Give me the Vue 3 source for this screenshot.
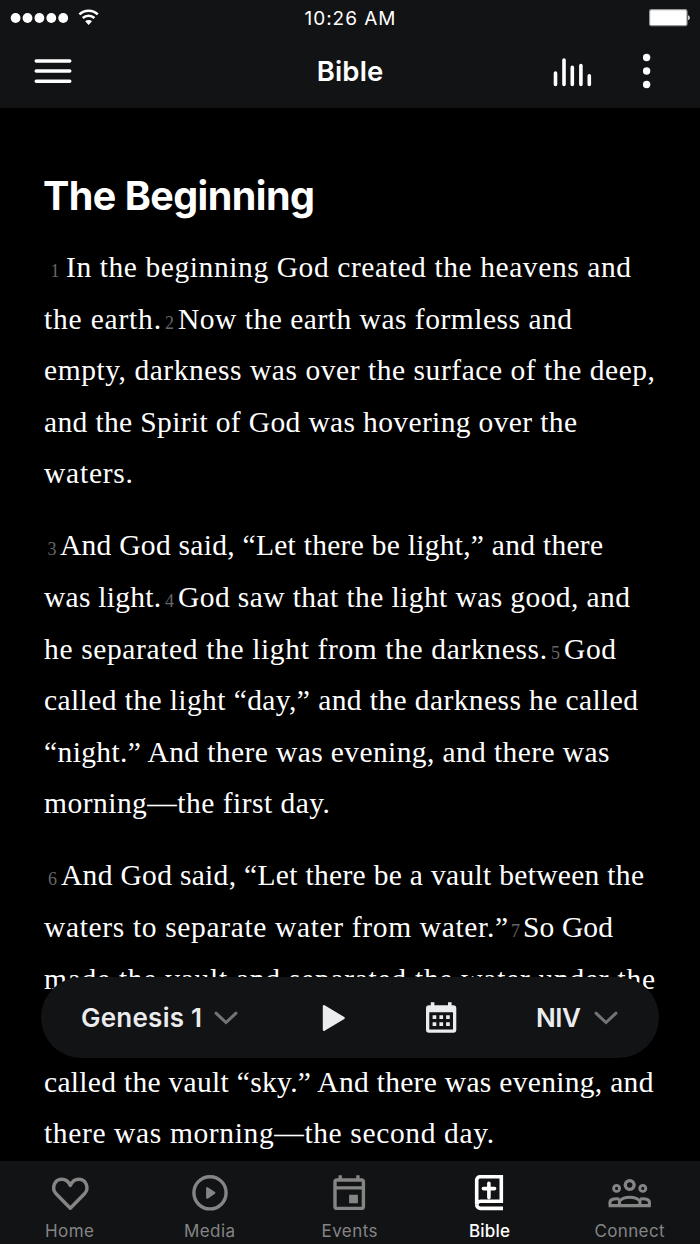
<template>
  <div class="screen">
    <header class="top">
      <div class="status">
        <div class="signal">
          <svg width="100" height="36" viewBox="0 0 100 36">
            <circle v-for="n in 5" :key="n" :cx="3.7 + n * 11.9" cy="18" r="4.9" fill="#fff" />
            <g fill="none" stroke="#fff" stroke-width="2.5">
              <path d="M79.4 14.4a13.2 13.2 0 0 1 18.4 0" />
              <path d="M82.8 18a8.4 8.4 0 0 1 11.6 0" />
            </g>
            <path d="M85.2 21.3a4.8 4.8 0 0 1 6.8 0l-3.4 3.6z" fill="#fff" />
          </svg>
        </div>
        <span class="time" :style="fit('10:26 AM', sans(400, 19), 91)">10:26 AM</span>
        <svg class="battery" width="42" height="18" viewBox="0 0 42 18">
          <rect x=".6" y=".7" width="37.4" height="16" rx="1.8" fill="#fff" stroke="#97989a" stroke-width="1.2" />
          <path d="M39.2 6.2c2 .8 2 4.2 0 5z" fill="#fff" />
        </svg>
      </div>
      <div class="bar">
        <svg class="menu" width="38" height="26" viewBox="0 0 38 26">
          <path d="M2.2 3h33.6M2.2 13h33.6M2.2 23.3h33.6" stroke="#fff" stroke-width="3.4" stroke-linecap="round" />
        </svg>
        <h1 :style="fit('Bible', sans(600, 27.5), 66.5)">Bible</h1>
        <div class="actions">
          <svg width="40" height="33" viewBox="0 0 40 33">
            <path d="M2.5 18v11.4M11 5v24.4M19.3 12.4v17M27.9 10.6v18.8M36.3 20.8v8.6" stroke="#fff" stroke-width="3.6" stroke-linecap="round" />
          </svg>
          <svg width="8" height="36" viewBox="0 0 8 36">
            <circle cx="3.6" cy="4.5" r="3.7" fill="#fff" />
            <circle cx="3.6" cy="18" r="3.7" fill="#fff" />
            <circle cx="3.6" cy="31.5" r="3.7" fill="#fff" />
          </svg>
        </div>
      </div>
    </header>

    <main class="chapter">
      <h2 :style="fit('The Beginning', sans(700, 39.5), 272)">The Beginning</h2>
      <div v-for="(paragraph, p) in paragraphs" :key="p" class="paragraph">
        <div v-for="(line, l) in paragraph" :key="l" class="line">
          <template v-for="(part, i) in line" :key="i">
            <span v-if="part.verse" class="verse" :style="{ width: part.width + 'px' }">{{ part.verse }}</span>
            <span v-else class="words" :style="fit(part.text, serif, part.width)">{{ part.text }}</span>
          </template>
        </div>
      </div>
    </main>

    <div class="player">
      <button class="picker book">
        <span :style="fit('Genesis 1', sans(600, 26), 121)">Genesis 1</span>
        <svg width="24" height="14" viewBox="0 0 24 14">
          <path d="M2 2.2l10 9.3 10-9.3" fill="none" stroke="#737476" stroke-width="3" stroke-linecap="round" />
        </svg>
      </button>
      <svg class="play" width="24" height="28" viewBox="0 0 24 28">
        <path d="M2 2.2v23.6L21.6 14z" fill="#ebecee" stroke="#ebecee" stroke-width="2.4" stroke-linejoin="round" />
      </svg>
      <svg class="calendar" width="32" height="32" viewBox="0 0 32 32">
        <path fill="#ebecee" fill-rule="evenodd" d="M5.8.3h3.6v3H23v-3h3.6v3h1.7a3 3 0 0 1 3 3v21.5a3 3 0 0 1-3 3H4a3 3 0 0 1-3-3V6.3a3 3 0 0 1 3-3h1.8zM4.3 10.2v17.3H28V10.2z" />
        <path fill="#ebecee" d="M7.6 13.2h3.7v3.7H7.6zM14.4 13.2h3.7v3.7h-3.7zM21.1 13.2h3.7v3.7h-3.7zM7.6 20.2h3.7v3.7H7.6zM14.4 20.2h3.7v3.7h-3.7zM21.1 20.2h3.7v3.7h-3.7z" />
      </svg>
      <button class="picker version">
        <span :style="fit('NIV', sans(600, 26), 45)">NIV</span>
        <svg width="24" height="14" viewBox="0 0 24 14">
          <path d="M2 2.2l10 9.3 10-9.3" fill="none" stroke="#737476" stroke-width="3" stroke-linecap="round" />
        </svg>
      </button>
    </div>

    <nav class="tabs">
      <a v-for="tab in tabs" :key="tab.name" class="tab" :class="{ active: tab.name === 'Bible' }">
        <svg width="46" height="40" viewBox="0 0 46 40" fill="none" stroke="currentColor" stroke-width="3.4">
          <path v-if="tab.name === 'Home'" d="M23.3 35.2L9.1 20.8C4.3 15.9 7 6.2 14.7 6.2c4.4 0 7.2 3 8.6 6.3 1.4-3.3 4.2-6.3 8.6-6.3 7.7 0 10.4 9.7 5.6 14.6z" stroke-linejoin="round" />
          <template v-else-if="tab.name === 'Media'">
            <circle cx="23" cy="19.8" r="16.1" />
            <path d="M20.1 15v9.8l7.3-4.9z" fill="currentColor" stroke-width="2" stroke-linejoin="round" />
          </template>
          <template v-else-if="tab.name === 'Events'">
            <rect x="8" y="7" width="28.4" height="28.4" rx="2" />
            <path d="M7 14.9h30M13.2 2.2V8M30.9 2.2V8" />
            <path d="M22.1 21.7h8.8v8.6h-8.8z" fill="currentColor" stroke="none" />
          </template>
          <template v-else-if="tab.name === 'Bible'">
            <path d="M36 35.4H13.5a3.8 3.8 0 0 1-3.8-3.8V7.1A3.3 3.3 0 0 1 13 3.8h21.3v24.5H13.5a3.8 3.8 0 0 0-3.8 3.6" stroke-width="3.6" />
            <path d="M21.9 10.2v14.4M16.4 15.6h11.2" stroke-width="3.6" stroke-linecap="round" />
          </template>
          <template v-else>
            <circle cx="22.7" cy="12" r="4.4" />
            <circle cx="9.6" cy="15.4" r="3" stroke-width="2.9" />
            <circle cx="35.8" cy="15.4" r="3" stroke-width="2.9" />
            <path d="M3 32.5v-3.2c0-2.8 4.6-4.2 9.2-3.2M42.4 32.5v-3.2c0-2.8-4.6-4.2-9.2-3.2M12.5 32.5v-4.7c5-4.8 15.4-4.8 20.4 0v4.7M1.6 32.6h42.2" stroke-width="3.1" />
          </template>
        </svg>
        <span :style="fit(tab.name, sans(tab.weight, 17), tab.width)">{{ tab.name }}</span>
      </a>
    </nav>
  </div>
</template>

<script setup>
const serif = '29.5px "Liberation Serif"';
const sans = (weight, size) => `${weight} ${size}px Inter`;

const ctx = document.createElement('canvas').getContext('2d');

// tracks a string out so that it fills the given width
const fit = (text, font, width) => {
  ctx.font = font;
  const spacing = (width - ctx.measureText(text).width) / (text.length - 1);
  return { letterSpacing: spacing.toFixed(3) + 'px', width: width + 'px' };
};

const t = (text, width) => ({ text, width });
const v = (verse, width) => ({ verse, width });

const paragraphs = [
  [
    [v(1, 22), t('In the beginning God created the heavens and', 565)],
    [t('the earth.', 117), v(2, 17), t('Now the earth was formless and', 394)],
    [t('empty, darkness was over the surface of the deep,', 611)],
    [t('and the Spirit of God was hovering over the', 533)],
    [t('waters.', 89)]
  ],
  [
    [v(3, 16), t('And God said, “Let there be light,” and there', 543)],
    [t('was light.', 117), v(4, 17), t('God saw that the light was good, and', 452)],
    [t('he separated the light from the darkness.', 503), v(5, 17), t('God', 52)],
    [t('called the light “day,” and the darkness he called', 594)],
    [t('“night.” And there was evening, and there was', 567)],
    [t('morning—the first day.', 286)]
  ],
  [
    [v(6, 17), t('And God said, “Let there be a vault between the', 583)],
    [t('waters to separate water from water.”', 464), v(7, 15), t('So God', 90)],
    [t('made the vault and separated the water under the', 611)],
    [], // sits behind the player
    [t('called the vault “sky.” And there was evening, and', 611)],
    [t('there was morning—the second day.', 450)]
  ]
];

const tabs = [
  { name: 'Home', width: 49, weight: 400 },
  { name: 'Media', width: 51, weight: 400 },
  { name: 'Events', width: 56, weight: 400 },
  { name: 'Bible', width: 41, weight: 500 },
  { name: 'Connect', width: 70, weight: 400 }
];
</script>

<style scoped>
.screen {
  position: relative;
  display: flex;
  flex-direction: column;
  width: 700px;
  height: 1244px;
  overflow: hidden;
  background: #000;
  color: #fff;
  font-family: Inter, "Liberation Sans", sans-serif;
  white-space: nowrap;
}

.top {
  flex: none;
  height: 108px;
  background: #121315;
}

.status {
  display: grid;
  grid-template-columns: 1fr auto 1fr;
  align-items: center;
  height: 36px;
}

.signal {
  height: 36px;
}

.time {
  font-size: 19px;
}

.battery {
  justify-self: end;
  margin-right: 9px;
}

.bar {
  display: grid;
  grid-template-columns: 1fr auto 1fr;
  align-items: center;
  height: 70px;
}

.menu {
  margin-left: 34px;
}

h1 {
  margin: 0;
  font-size: 27.5px;
  font-weight: 600;
  line-height: 36px;
}

.actions {
  display: flex;
  justify-content: flex-end;
  align-items: center;
  gap: 50px;
  padding-right: 49px;
}

.chapter {
  flex: 1;
  min-height: 0;
  overflow: hidden;
  padding: 64px 43px 0;
}

h2 {
  margin: 0 0 22px;
  font-size: 39.5px;
  font-weight: 700;
  line-height: 48px;
}

.paragraph {
  margin: 0 0 20.4px 1px;
  font-family: "Liberation Serif", serif;
  font-size: 29.5px;
}

.line {
  display: flex;
  align-items: baseline;
  height: 51.6px;
  line-height: 51.6px;
}

.words {
  flex: none;
}

.verse {
  flex: none;
  color: #666;
  font-size: 18px;
  text-align: center;
}

.player {
  position: absolute;
  left: 41px;
  top: 977px;
  display: flex;
  align-items: center;
  box-sizing: border-box;
  width: 618px;
  height: 81px;
  padding: 0 41px 0 40px;
  border-radius: 41px;
  background: #121315;
  color: #ebecee;
}

.picker {
  display: flex;
  align-items: center;
  padding: 0;
  border: none;
  background: none;
  color: inherit;
  font: 600 26px/32px Inter, sans-serif;
  text-align: left;
}

.picker svg {
  margin-left: 12px;
}

.version svg {
  margin-left: 13px;
}

.play {
  margin-left: 84px;
}

.calendar {
  margin-left: 79px;
}

.version {
  margin-left: auto;
}

.tabs {
  flex: none;
  display: grid;
  grid-template-columns: repeat(5, 1fr);
  height: 83px;
  background: #121315;
}

.tab {
  display: flex;
  flex-direction: column;
  align-items: center;
  padding-top: 12px;
  color: #858585;
  font-size: 17px;
  line-height: 20px;
}

.tab span {
  margin: 8px 1px 0 0;
}

.tab.active {
  color: #fff;
  font-weight: 500;
}
</style>

<style>
body {
  margin: 0;
  background: #000;
}
</style>
